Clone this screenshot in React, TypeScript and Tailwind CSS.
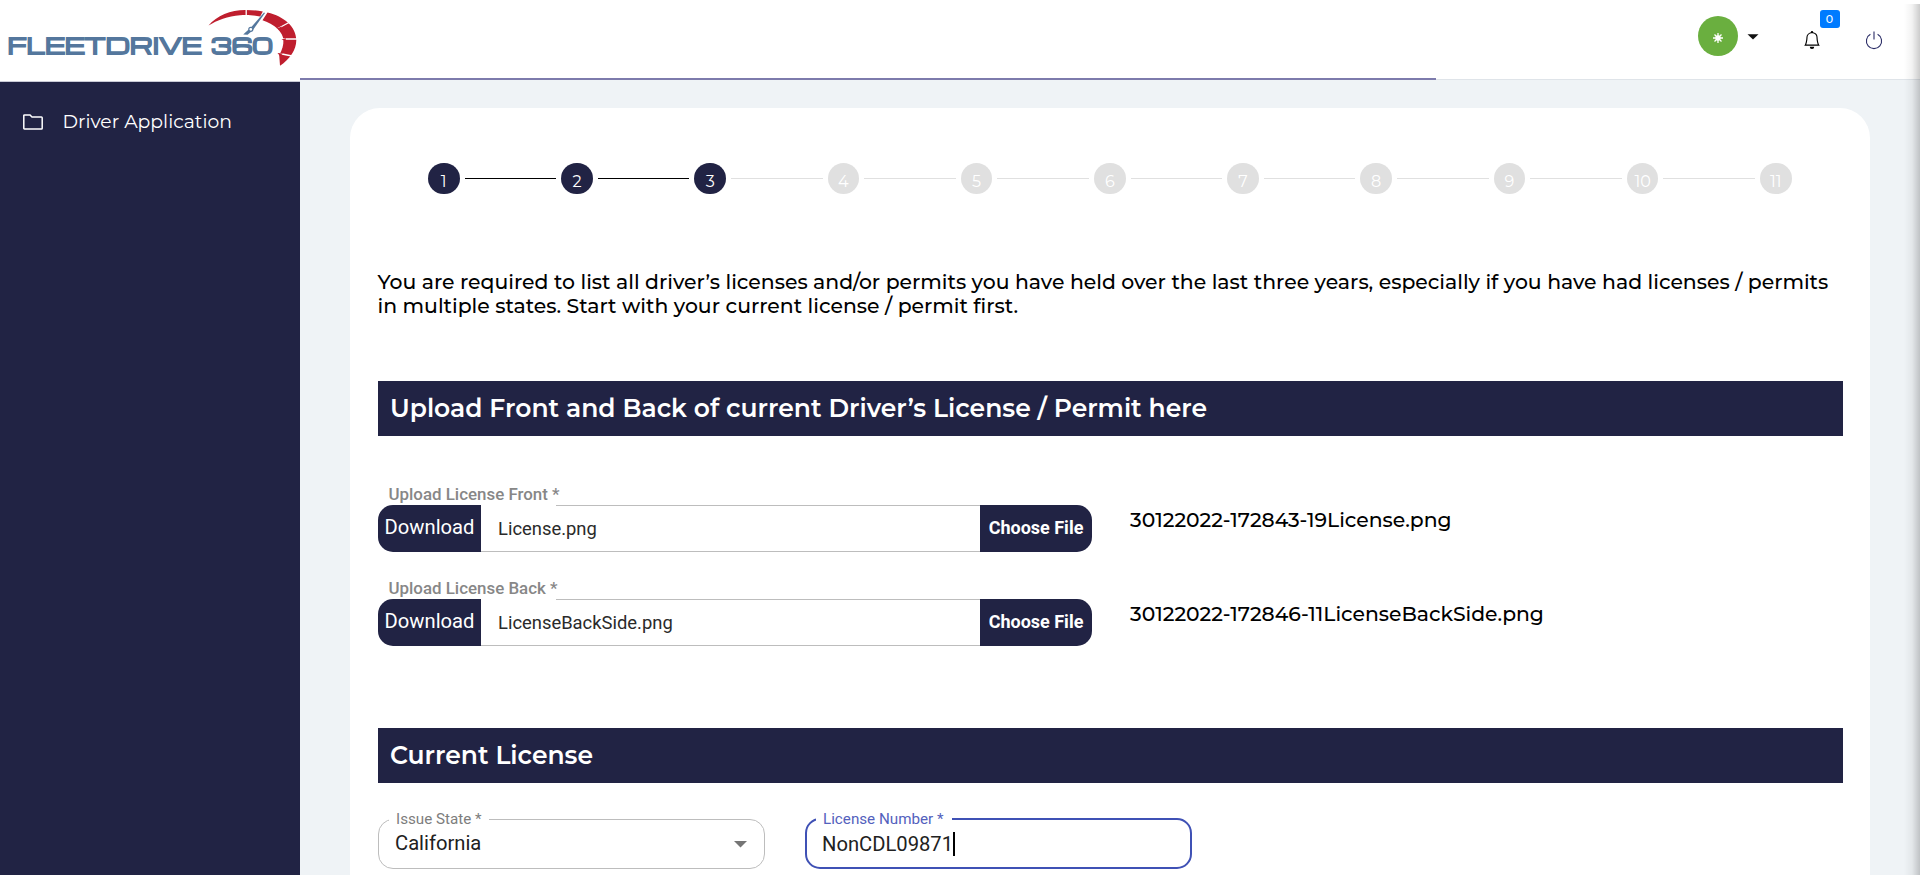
const STEPS = [1, 2, 3, 4, 5, 6, 7, 8, 9, 10, 11];
const CURRENT_STEP = 3;

function Logo() {
  return (
    <svg width="300" height="81" viewBox="0 0 300 81" className="block shrink-0">
      <g fill="#54779d" stroke="#54779d" strokeWidth="1.1" fontSize="21" fontWeight="700" fontFamily="Michroma, Orbitron, Montserrat, Inter, sans-serif">
        <text x="7.5" y="54.2" textLength="194" lengthAdjust="spacingAndGlyphs">FLEETDRIVE</text>
        <text x="211" y="54.2" textLength="62" lengthAdjust="spacingAndGlyphs">360</text>
      </g>
      <path
        d="M208.5 25.6C217 15.5 231 9.8 246 10C252 10 258 10.6 262.8 11.6L260.2 16.6C252 14.8 246 14.6 240 15.2C228 16.2 217 20 208.5 25.6Z"
        fill="#bf1e2e"
      />
      <path
        d="M267.5 12.6C284 16.5 296.3 27 296.3 40C296.3 50 290 59 280 65.8L279.2 55C282.3 50 283.6 45 283.4 40C283 32 275 24.5 262.5 20.2Z"
        fill="#bf1e2e"
      />
      <g stroke="#fff" strokeWidth="1.3">
        <path d="M246.2 9V18M276 29.5L289 22.5M281 39H298M277 53L292 56" />
      </g>
      <path d="M276.5 28.5L282 26.6L280 30ZM281.5 39.5L286 38.2L285.5 41ZM277.5 53L283 53.6L280 56Z" fill="#bf1e2e" />
      <path d="M264 12.5L250 28.5L252.6 30.5L265 13Z" fill="#54779d" />
      <path d="M243.2 34.6L248.6 29.5L251.4 31.6L247.6 34.8Z" fill="#54779d" />
      <circle cx="250.8" cy="29.3" r="2" fill="#fff" stroke="#54779d" strokeWidth="1.2" />
    </svg>
  );
}

function Stepper() {
  return (
    <div className="mr-[78.5px] ml-[78px] flex h-[31px] items-center">
      {STEPS.map((n) => {
        const reached = n <= CURRENT_STEP;
        return (
          <div key={n} className={n === 1 ? 'flex items-center' : 'flex flex-1 items-center'}>
            {n > 1 && <div className={`mx-[5px] h-px flex-1 ${reached ? 'bg-black' : 'bg-[#e0e0e0]'}`} />}
            <div className={`flex h-[31px] w-[31.5px] shrink-0 items-center justify-center rounded-full pt-[7px] text-base leading-none text-white ${reached ? 'bg-[#212344]' : 'bg-[#e0e0e0]'}`}>
              {n}
            </div>
          </div>
        );
      })}
    </div>
  );
}

function Banner({ children }: { children: string }) {
  return (
    <h2 className="flex h-[55px] items-center bg-[#212344] pl-3 text-[25px] font-semibold text-white">{children}</h2>
  );
}

function UploadRow({ label, file, stored }: { label: string; file: string; stored: string }) {
  return (
    <div className="flex h-[94px] items-start">
      <div className="flex w-[714px] flex-col font-['Roboto',sans-serif]">
        <div className="pl-[10.5px] text-[16.9px] font-medium leading-[22px] text-[#878787]">{label}</div>
        <div className="relative flex h-[47px] overflow-hidden rounded-[15px]">
          <button className="w-[103px] shrink-0 bg-[#212344] pb-[3px] text-[20.2px] text-white">Download</button>
          <div className="flex flex-1 items-center border-y border-[#bdbdbd] pl-[17px] text-[18.4px] text-[#2a2a2a]">{file}</div>
          <button className="w-28 shrink-0 bg-[#212344] pb-[3px] text-[18px] font-bold text-white">Choose File</button>
          <div className="absolute top-0 left-[103px] h-px w-[75px] bg-white" />
        </div>
      </div>
      <div className="ml-[38px] pt-[25px] text-[20.33px] font-medium leading-6">{stored}</div>
    </div>
  );
}

function BellIcon() {
  return (
    <svg width="18" height="18" viewBox="0 0 16 16" fill="#000">
      <path d="M8 16a2 2 0 0 0 2-2H6a2 2 0 0 0 2 2zM8 1.918l-.797.161A4.002 4.002 0 0 0 4 6c0 .628-.134 2.197-.459 3.742-.16.767-.376 1.566-.663 2.258h10.244c-.287-.692-.502-1.49-.663-2.258C12.134 8.197 12 6.628 12 6a4.002 4.002 0 0 0-3.203-3.92L8 1.917zM14.22 12c.223.447.481.801.78 1H1c.299-.199.557-.553.78-1C2.68 10.2 3 6.88 3 6c0-2.42 1.72-4.44 4.005-4.901a1 1 0 1 1 1.99 0A5.002 5.002 0 0 1 13 6c0 .88.32 4.2 1.22 6z" />
    </svg>
  );
}

export default function App() {
  return (
    <div className="relative flex h-[875px] w-full overflow-hidden bg-[#eff3f6] font-['Montserrat','Inter',sans-serif] text-black">
      <aside className="flex w-[300px] shrink-0 flex-col bg-white">
        <Logo />
        <nav className="flex-1 border-t border-[#c9cad6] bg-[#212344] pt-[28px]">
          <a className="flex h-6 items-center pl-[23px] text-[18.8px] text-white">
            <svg width="20" height="16" viewBox="0 0 20 16" fill="none" stroke="#fff" strokeWidth="1.5">
              <path d="M.8 14.2V1.6Q.8.9 1.5.9H7L9 3H18.4Q19.2 3 19.2 3.8V14.2Q19.2 15 18.4 15H1.5Q.8 15 .8 14.2Z" />
            </svg>
            <span className="ml-[19.5px]">Driver Application</span>
          </a>
        </nav>
      </aside>

      <main className="flex flex-1 flex-col">
        <header className="flex h-[78px] shrink-0 items-start justify-end bg-white">
          <div className="mt-4 flex size-10 items-center justify-center rounded-full bg-[#6aaf3f]">
            <svg width="10" height="10" viewBox="0 0 10 10" stroke="#fff" strokeWidth="1.3" className="mt-[3px]">
              <path d="M5 0V10M0 5H10M1.5 1.5L8.5 8.5M8.5 1.5L1.5 8.5" />
              <circle cx="5" cy="5" r="2" fill="#fff" />
            </svg>
          </div>
          <svg width="12" height="6" viewBox="0 0 12 6" className="mt-[34px] ml-[9px]">
            <path d="M.5.2H11.5L6 5.6Z" fill="#111" />
          </svg>
          <div className="relative mt-[31px] ml-[43.5px] size-[18px]">
            <BellIcon />
            <span className="absolute -top-[21px] left-[17px] flex h-[18px] w-5 items-center justify-center rounded-[3px] bg-[#007bff] text-[11px] font-medium leading-none text-white">
              0
            </span>
          </div>
          <svg width="18" height="19" viewBox="0 0 18 19" className="mt-[31px] mr-[37px] ml-[44.5px]" fill="none" stroke="#2a2c66" strokeWidth="1.1">
            <path d="M9 .5V8.5M5.4 3.3A7.6 7.6 0 1 0 12.6 3.3" />
          </svg>
        </header>
        <div className="flex h-[2px] shrink-0 bg-white">
          <div className="w-[1136px] bg-[#7d7bac]" />
          <div className="mt-px flex-1 bg-[#dfe4e9]" />
        </div>

        <section className="mt-7 mr-[50px] ml-[50px] flex-1 rounded-t-[30px] bg-white pt-[55px]">
          <Stepper />
          <div className="pr-[27px] pl-7">
            <p className="mt-[76px] -ml-[0.5px] text-[20.4px] font-medium leading-6">
              You are required to list all driver’s licenses and/or permits you have held over the last three years, especially if you have had licenses / permits
              in multiple states. Start with your current license / permit first.
            </p>
            <div className="mt-[63px]">
              <Banner>Upload Front and Back of current Driver’s License / Permit here</Banner>
            </div>
            <div className="mt-[47px]">
              <UploadRow label="Upload License Front *" file="License.png" stored="30122022-172843-19License.png" />
              <UploadRow label="Upload License Back *" file="LicenseBackSide.png" stored="30122022-172846-11LicenseBackSide.png" />
            </div>
            <div className="mt-[57px]">
              <Banner>Current License</Banner>
            </div>
            <div className="mt-[35px] flex items-end gap-10 font-['Roboto',sans-serif] text-[20.2px] text-[#212121]">
              <div className="relative flex h-[50px] w-[387px] items-center justify-between rounded-[15px] border border-[#bdbdbd] pr-[17px] pb-[2px] pl-4">
                <span className="absolute -top-[10px] left-[10px] bg-white px-[7px] text-[15.2px] leading-[18px] text-[#7d7d7d]">Issue State *</span>
                <span>California</span>
                <svg width="13" height="7" viewBox="0 0 13 7" className="mt-[3px]">
                  <path d="M0 0H13L6.5 6.6Z" fill="#757575" />
                </svg>
              </div>
              <div className="relative flex h-[51px] w-[387px] items-center rounded-[15px] border-2 border-[#3f51b5] pt-px pl-[15px]">
                <span className="absolute -top-[10px] left-[9px] bg-white pr-[9px] pl-[7px] text-[15.2px] leading-[18px] text-[#5361bd]">License Number *</span>
                <span>NonCDL09871</span>
                <span className="h-6 w-[2px] bg-black" />
              </div>
            </div>
          </div>
        </section>
      </main>
      <div className="pointer-events-none absolute top-1 right-0 bottom-0 w-4 bg-linear-to-r from-black/0 via-black/5 to-black/20" />
    </div>
  );
}
